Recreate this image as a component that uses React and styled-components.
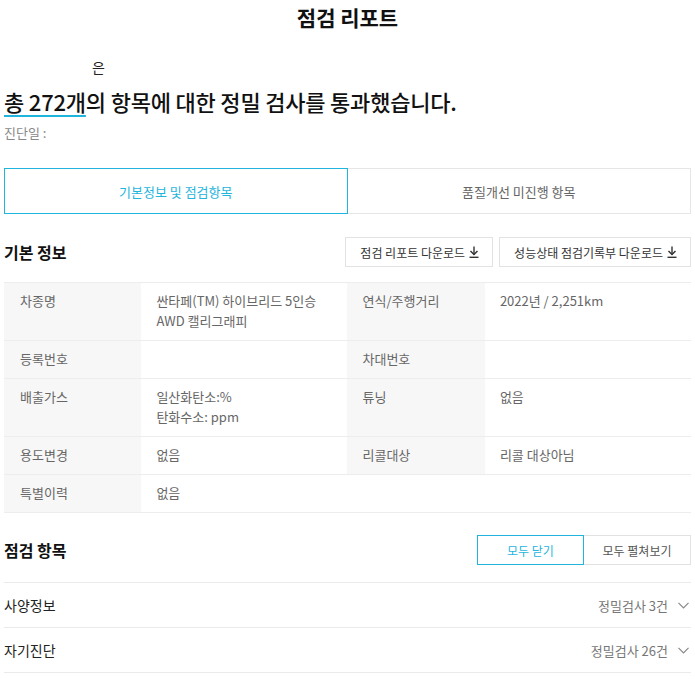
import React from "react";
import styled, { createGlobalStyle } from "styled-components";

const BLUE = "#1fb5dd";

const GlobalStyle = createGlobalStyle`
  html, body { margin: 0; padding: 0; background: #fff; }
  body {
    font-family: "Noto Sans CJK KR", "Noto Sans", sans-serif;
    color: #222;
  }
  * { box-sizing: border-box; }
`;

const Page = styled.div`
  padding: 0 4px;
  width: 695px;
`;

const Title = styled.h1`
  margin: 0;
  font-size: 21px;
  font-weight: 700;
  line-height: 34px;
  text-align: center;
  color: #111;
`;

const CarLine = styled.div`
  margin-top: 22px;
  font-size: 14px;
  line-height: 22px;
  color: #222;
`;

const CarName = styled.span`
  display: inline-block;
  width: 88px;
`;

const Headline = styled.h2`
  margin: 8px 0 0;
  font-size: 22px;
  font-weight: 500;
  line-height: 30px;
  color: #111;
  letter-spacing: -0.2px;
`;

const Highlight = styled.span`
  text-decoration: underline;
  text-decoration-color: ${BLUE};
  text-decoration-thickness: 2px;
  text-underline-offset: 4px;
`;

const DateLine = styled.div`
  margin-top: 7px;
  font-size: 13px;
  line-height: 20px;
  color: #888;
`;

const Tabs = styled.div`
  margin-top: 25px;
  display: grid;
  grid-template-columns: 1fr 1fr;
`;

const Tab = styled.button`
  height: 46px;
  background: #fff;
  font-family: inherit;
  font-size: 13px;
  cursor: pointer;
  color: ${(p) => (p.$active ? BLUE : "#666")};
  border: 1px solid ${(p) => (p.$active ? BLUE : "#e6e6e6")};
  ${(p) => (p.$active ? "" : "border-left: none;")}
`;

const SectionHead = styled.div`
  margin-top: ${(p) => p.$top}px;
  display: flex;
  justify-content: space-between;
  align-items: center;
  height: 30px;
`;

const SectionTitle = styled.h3`
  margin: 0;
  font-size: 16px;
  font-weight: 700;
  color: #111;
`;

const ButtonRow = styled.div`
  display: flex;
  gap: ${(p) => p.$gap}px;
`;

const DownloadButton = styled.button`
  height: 30px;
  padding: 0 13px 0 14px;
  display: flex;
  align-items: center;
  gap: 4px;
  background: #fff;
  border: 1px solid #e2e2e2;
  font-family: inherit;
  font-size: 12px;
  color: #333;
  cursor: pointer;
`;

const ToggleButton = styled.button`
  width: 107px;
  height: 30px;
  background: #fff;
  font-family: inherit;
  font-size: 12px;
  cursor: pointer;
  color: ${(p) => (p.$active ? BLUE : "#555")};
  border: 1px solid ${(p) => (p.$active ? BLUE : "#e2e2e2")};
  ${(p) => (p.$active ? "" : "border-left: none;")}
`;

const InfoTable = styled.div`
  margin-top: 15px;
  border-top: 1px solid #ededed;
`;

const InfoRow = styled.div`
  display: grid;
  grid-template-columns: 20% 30% 20% 30%;
  border-bottom: 1px solid #ededed;
`;

const Label = styled.div`
  background: #f7f7f7;
  padding: 8px 15px 9px ${(p) => (p.$first ? 16 : 15)}px;
  font-size: 13px;
  line-height: 20px;
  color: #666;
`;

const Value = styled.div`
  padding: 8px 15px 9px;
  font-size: 13px;
  line-height: 20px;
  color: #666;
  grid-column: span ${(p) => p.$span || 1};
`;

const Accordion = styled.div`
  margin-top: 17px;
  border-top: 1px solid #eaeaea;
`;

const AccItem = styled.div`
  height: 45px;
  display: flex;
  align-items: center;
  justify-content: space-between;
  border-bottom: 1px solid #eaeaea;
`;

const AccTitle = styled.span`
  font-size: 14px;
  color: #222;
`;

const AccMeta = styled.span`
  display: flex;
  align-items: center;
  gap: 10px;
  font-size: 13px;
  color: #777;
  padding-right: 2px;
`;

const DownIcon = () => (
  <svg width="10" height="12" viewBox="0 0 10 12" fill="none" stroke="#333" strokeWidth="1.4">
    <line x1="5" y1="0.5" x2="5" y2="8.5" />
    <polyline points="1.5,5 5,8.6 8.5,5" />
    <line x1="0.5" y1="11.3" x2="9.5" y2="11.3" />
  </svg>
);

const Chevron = () => (
  <svg width="11" height="7" viewBox="0 0 11 7" fill="none" stroke="#888" strokeWidth="1.2">
    <polyline points="0.5,0.8 5.5,5.8 10.5,0.8" />
  </svg>
);

const rows = [
  [["차종명", ["싼타페(TM) 하이브리드 5인승", "AWD 캘리그래피"]], ["연식/주행거리", ["2022년 / 2,251km"]]],
  [["등록번호", [""]], ["차대번호", [""]]],
  [["배출가스", ["일산화탄소:%", "탄화수소: ppm"]], ["튜닝", ["없음"]]],
  [["용도변경", ["없음"]], ["리콜대상", ["리콜 대상아님"]]],
];

const lines = (arr) =>
  arr.map((t, i) => (
    <React.Fragment key={i}>
      {i > 0 && <br />}
      {t}
    </React.Fragment>
  ));

export default function App() {
  return (
    <>
      <GlobalStyle />
      <Page>
        <Title>점검 리포트</Title>
        <CarLine>
          <CarName />은
        </CarLine>
        <Headline>
          <Highlight>총 272개</Highlight>의 항목에 대한 정밀 검사를 통과했습니다.
        </Headline>
        <DateLine>진단일 :</DateLine>

        <Tabs>
          <Tab $active>기본정보 및 점검항목</Tab>
          <Tab>품질개선 미진행 항목</Tab>
        </Tabs>

        <SectionHead $top={23}>
          <SectionTitle>기본 정보</SectionTitle>
          <ButtonRow $gap={6}>
            <DownloadButton>
              점검 리포트 다운로드 <DownIcon />
            </DownloadButton>
            <DownloadButton>
              성능상태 점검기록부 다운로드 <DownIcon />
            </DownloadButton>
          </ButtonRow>
        </SectionHead>

        <InfoTable>
          {rows.map((r, i) => (
            <InfoRow key={i}>
              <Label $first>{r[0][0]}</Label>
              <Value>{lines(r[0][1])}</Value>
              <Label>{r[1][0]}</Label>
              <Value>{lines(r[1][1])}</Value>
            </InfoRow>
          ))}
          <InfoRow>
            <Label $first>특별이력</Label>
            <Value $span={3}>없음</Value>
          </InfoRow>
        </InfoTable>

        <SectionHead $top={22}>
          <SectionTitle>점검 항목</SectionTitle>
          <ButtonRow $gap={0}>
            <ToggleButton $active>모두 닫기</ToggleButton>
            <ToggleButton>모두 펼쳐보기</ToggleButton>
          </ButtonRow>
        </SectionHead>

        <Accordion>
          <AccItem>
            <AccTitle>사양정보</AccTitle>
            <AccMeta>
              정밀검사 3건 <Chevron />
            </AccMeta>
          </AccItem>
          <AccItem>
            <AccTitle>자기진단</AccTitle>
            <AccMeta>
              정밀검사 26건 <Chevron />
            </AccMeta>
          </AccItem>
        </Accordion>
      </Page>
    </>
  );
}
